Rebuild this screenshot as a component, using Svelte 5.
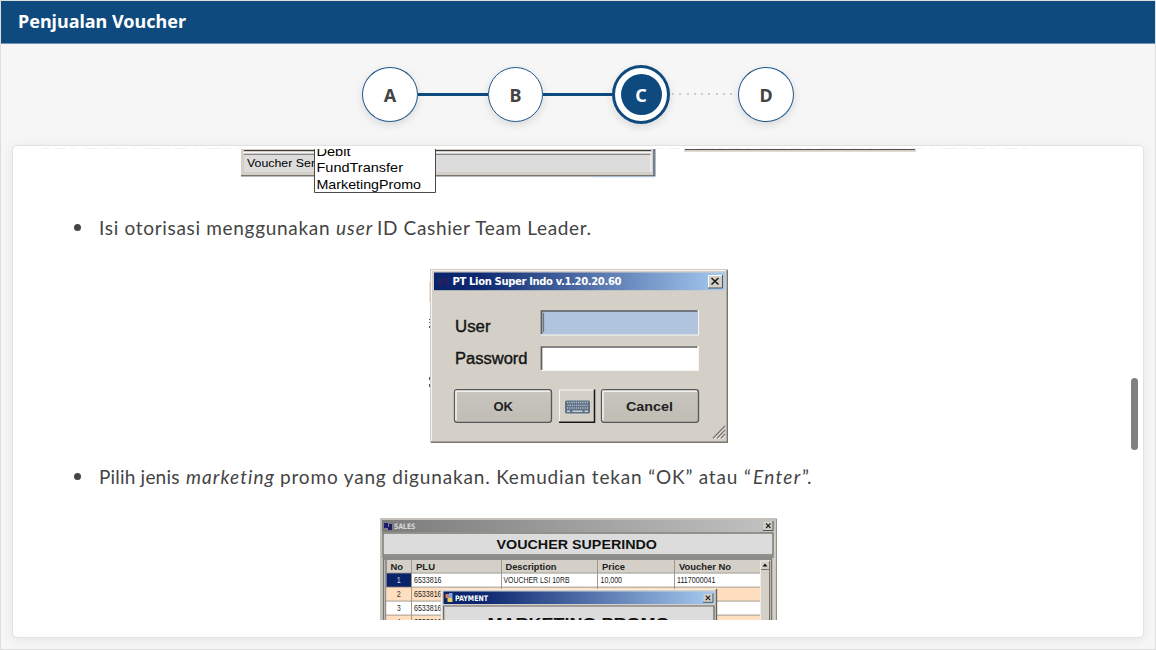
<script>
  const steps = [
    { label: 'A', state: 'done' },
    { label: 'B', state: 'done' },
    { label: 'C', state: 'current' },
    { label: 'D', state: 'todo' }
  ];
  const rows = [
    { y: 573, n: '1', fill: '#fff' },
    { y: 587, n: '2', fill: '#ffdfbf' },
    { y: 601, n: '3', fill: '#fff' },
    { y: 615, n: '4', fill: '#ffdfbf' }
  ];
  const keys = [0, 1, 2, 3, 4, 5, 6, 7, 8, 9];
</script>

<div class="page">
  <header>Penjualan Voucher</header>
  <nav>
    {#each steps as s, i}
      {#if i > 0}
        <span class="link l{i}" class:dotted={s.state === 'todo'}></span>
      {/if}
      <span class="step s{i}" class:current={s.state === 'current'}><b>{s.label}</b></span>
    {/each}
  </nav>

  <main>
    <div class="view">
      <svg class="wide" width="1129" height="46" viewBox="13 148 1129 46">
        <path d="M42 148.5H242M656 148.5H1030" stroke="#f3f3f3" stroke-dasharray="7 4 13 5 4 9 16 3" />
        <rect x="241" y="149" width="414.500" height="27" fill="#d4d0c8" />
        <path d="M244 150.500H651" stroke="#3a3a3e" />
        <path d="M243 152.500H652" stroke="#f4f4f4" />
        <rect x="244" y="154" width="407" height="18" fill="#dcdcdc" />
        <path d="M244 154.500H650.500" stroke="#858585" />
        <path d="M651 154V172" stroke="#fff" />
        <path d="M241 175.700H655" stroke="#77756f" stroke-width="1.400" />
        <path d="M654 149V176" stroke="#666a72" stroke-width="1.600" />
        <path d="M655.500 149V176.500M593 176.700H655" stroke="#a7bfdc" />
        <text x="247" y="167" font-size="11.500" textLength="68" lengthAdjust="spacingAndGlyphs">Voucher Ser</text>
        <path d="M314.500 149V192.500H435.500V149" fill="#fff" stroke="#4a4a4a" />
        <g font-size="13.500">
          <clipPath id="crop"><rect x="315" y="149" width="120" height="43" /></clipPath>
          <g clip-path="url(#crop)"><text x="316.500" y="156" textLength="34" lengthAdjust="spacingAndGlyphs">Debit</text></g>
          <text x="316.500" y="172.300" textLength="86.500" lengthAdjust="spacingAndGlyphs">FundTransfer</text>
          <text x="316.500" y="189" textLength="104.500" lengthAdjust="spacingAndGlyphs">MarketingPromo</text>
        </g>
        <path d="M684 150.500H916" stroke="#d4cec3" stroke-width="2.600" />
        <path d="M685 149.500H915" stroke="#55524d" />
      </svg>

      <p class="item first"><i class="dot"></i><span class="a">Isi otorisasi menggunakan</span><em class="b">user</em><span class="c">ID Cashier Team Leader.</span></p>

      <svg class="wide" width="1129" height="175" viewBox="13 269 1129 175">
        <defs>
          <linearGradient id="bar"><stop offset="0" stop-color="#0a246a" /><stop offset=".15" stop-color="#0d2870" /><stop offset="1" stop-color="#a6caf0" /></linearGradient>
          <linearGradient id="btn" x2="0" y2="1"><stop offset="0" stop-color="#c8c5be" /><stop offset="1" stop-color="#c0bdb5" /></linearGradient>
        </defs>
        <path d="M429.500 282v20" stroke="#f3dfcb" />
        <path d="M430 319v1M430 322v1M430 326v2M430 377v3M430 384v3" stroke="#222" stroke-width="1.500" />
        <rect x="430" y="269" width="298" height="174" fill="#d4d0c8" />
        <path d="M431.500 442V270.500H726" fill="none" stroke="#f5f3ef" />
        <path d="M430.500 442V269.500H727" fill="none" stroke="#cfccc5" />
        <path d="M727.300 270V442.300H431" fill="none" stroke="#77766f" stroke-width="1.400" />
        <rect x="434" y="272.500" width="291" height="17.700" fill="url(#bar)" />
        <path d="M438 278h3v3h3v-3h5v7h-4v-2h-3v2h-4z" fill="#251f63" />
        <text class="tahoma" x="452.500" y="285" font-size="10" textLength="169">PT Lion Super Indo v.1.20.20.60</text>
        <rect x="708" y="275" width="14.500" height="13" fill="#d4d0c8" />
        <path d="M708.500 287.500V275.500H722" fill="none" stroke="#fff" />
        <path d="M722.500 275V288H708" fill="none" stroke="#55534f" />
        <path d="M711.500 278l7 6.500M718.500 278l-7 6.500" stroke="#1d1d1d" stroke-width="1.700" />
        <g font-size="16" fill="#151515" stroke="#151515" stroke-width=".4">
          <text x="455" y="331.500" textLength="35.500" lengthAdjust="spacingAndGlyphs">User</text>
          <text x="455" y="364" textLength="72.500" lengthAdjust="spacingAndGlyphs">Password</text>
        </g>
        <rect x="541" y="310" width="157.500" height="25" fill="#b0c4de" />
        <path d="M541.500 334V311H697.500" fill="none" stroke="#5e5e5e" stroke-width="1.700" />
        <path d="M543.600 313v19" stroke="#6a6d74" />
        <path d="M541 335H698.500V310" fill="none" stroke="#f8f7f4" />
        <rect x="541" y="346" width="157.500" height="24" fill="#fff" />
        <path d="M541.500 370V347H697.500" fill="none" stroke="#5e5e5e" stroke-width="1.700" />
        <path d="M541 370.500H698.500V346" fill="none" stroke="#f8f7f4" />
        {#each [454, 601] as x}
          <rect x={x + 0.5} y="389.700" width="97" height="32.600" rx="2.500" fill="url(#btn)" stroke="#55585a" stroke-width="1.300" />
          <path d="M{x + 2} 420.500V391.200H{x + 96}" fill="none" stroke="#f2f0ec" stroke-width="1.600" />
        {/each}
        <g font-size="13" font-weight="bold" fill="#222">
          <text x="493.500" y="410.500" textLength="19.500" lengthAdjust="spacingAndGlyphs">OK</text>
          <text x="626" y="410.500" textLength="47" lengthAdjust="spacingAndGlyphs">Cancel</text>
        </g>
        <rect x="559" y="389.500" width="36" height="33" fill="#d4d0c8" />
        <path d="M559.500 422V390H594" fill="none" stroke="#f7f6f2" />
        <path d="M594.500 389.500V422.300H559" fill="none" stroke="#161616" stroke-width="1.500" />
        <rect x="565" y="400.500" width="25" height="13" rx="1.500" fill="#5d7086" />
        {#each keys as k}
          <path d="M{567 + k * 2.2} 402.500h1.200M{567.6 + k * 2.1} 405.300h1.200M{567 + k * 2.2} 408h1.200" stroke="#b9c2ca" stroke-width="1.300" />
        {/each}
        <path d="M567 411.200h3M572.500 411.200h10M584.500 411.200h3.500" stroke="#cbd2d7" stroke-width="1.400" />
        <path d="M714 439l11-12M718 439l7-8M722 439l3-4" stroke="#fff" />
        <path d="M713 438.300l12-12.300M717 438.300l8-8.300M721 438.300l4-4.300" stroke="#77756f" stroke-width="1.300" />
      </svg>

      <p class="item second"><i class="dot"></i><span class="d">Pilih jenis</span><em class="e">marketing</em><span class="f">promo yang digunakan. Kemudian tekan “OK” atau “</span><em class="g">Enter</em><span class="h">”.</span></p>

      <svg class="wide" width="1129" height="102" viewBox="13 518 1129 102">
        <defs>
          <linearGradient id="grey"><stop offset="0" stop-color="#7c7c7c" /><stop offset="1" stop-color="#c2c2c2" /></linearGradient>
        </defs>
        <rect x="380" y="518" width="397" height="110" fill="#d4d0c8" />
        <path d="M381 620V519H776" fill="none" stroke="#b5b2ac" />
        <path d="M776.400 519V620" stroke="#8b8a86" />
        <rect x="382" y="520" width="393" height="12" fill="url(#grey)" />
        <path d="M384 523h4v4h1v-3h3v6h-4v-2h-4z" fill="#1d1b6c" />
        <text x="394" y="528.500" class="tahoma" font-size="7.500" textLength="21.500" lengthAdjust="spacingAndGlyphs" style:fill="#d8d8d8">SALES</text>
        <rect x="763.500" y="521.500" width="9" height="8.500" fill="#d4d0c8" />
        <path d="M773 521V530.500H763" fill="none" stroke="#555" />
        <path d="M766 523.500l4.500 4.500M770.500 523.500l-4.500 4.500" stroke="#222" stroke-width="1.200" />
        <rect x="383" y="533" width="390" height="22" fill="#dcdcdc" stroke="#66645f" stroke-width="1.200" />
        <text x="496.500" y="549.200" font-size="13.500" font-weight="bold" fill="#111" textLength="160.500" lengthAdjust="spacingAndGlyphs">VOUCHER SUPERINDO</text>
        <path d="M382 557H774" stroke="#8d8d8c" stroke-width="2" />
        <path d="M383.500 620V559H771.500V620" fill="#d4d0c8" stroke="#777672" stroke-width="1.500" />
        <path d="M386 560V620" stroke="#555" />
        {#each rows as r}
          <rect x="386.500" y={r.y} width="373.500" height="14" fill={r.fill} />
          <rect x="386.500" y={r.y} width="25" height="14" fill={r.n === '1' ? '#0a246a' : r.fill} />
          <path d="M386 {r.y + 0.1}H760" stroke="#8e8a84" stroke-width=".8" />
          <text x="396.800" y={r.y + 9.9} font-size="8.500" fill={r.n === '1' ? '#cfd6e8' : '#333'} textLength="4" lengthAdjust="spacingAndGlyphs">{r.n}</text>
          <text x="414" y={r.y + 9.9} font-size="9" fill="#222" textLength="27.500" lengthAdjust="spacingAndGlyphs">6533816</text>
        {/each}
        <path d="M411.500 560V620M501.500 560V592M597.500 560V592M674.500 560V592" stroke="#96928b" stroke-width=".9" />
        <g font-size="9.500" font-weight="bold" fill="#222">
          <text x="390.500" y="570" textLength="12.500" lengthAdjust="spacingAndGlyphs">No</text>
          <text x="416" y="570" textLength="19" lengthAdjust="spacingAndGlyphs">PLU</text>
          <text x="505.500" y="570" textLength="51" lengthAdjust="spacingAndGlyphs">Description</text>
          <text x="602" y="570" textLength="23" lengthAdjust="spacingAndGlyphs">Price</text>
          <text x="679" y="570" textLength="52" lengthAdjust="spacingAndGlyphs">Voucher No</text>
        </g>
        <g font-size="8.800" fill="#222">
          <text x="503.500" y="582.900" textLength="66" lengthAdjust="spacingAndGlyphs">VOUCHER LSI 10RB</text>
          <text x="600.500" y="582.900" textLength="21.500" lengthAdjust="spacingAndGlyphs">10,000</text>
          <text x="677" y="582.900" textLength="38.500" lengthAdjust="spacingAndGlyphs">1117000041</text>
        </g>
        <rect x="760" y="560" width="10" height="60" fill="#d4d0c8" />
        <path d="M760.500 620V561H769" fill="none" stroke="#efede8" />
        <path d="M769.500 561V620M761 569.500H769" stroke="#74726d" />
        <path d="M762.500 566.500l2.500-3 2.500 3z" fill="#111" />
        <rect x="440.500" y="589" width="276.500" height="31" fill="#d4d0c8" />
        <path d="M441.500 620V589.500H716" fill="none" stroke="#f0eee9" />
        <path d="M716.500 589V620" stroke="#65635f" stroke-width="1.400" />
        <rect x="443.500" y="591.500" width="271" height="12.500" fill="url(#bar)" />
        <rect x="445.500" y="594" width="4" height="4" fill="#dc7b56" />
        <rect x="449" y="593" width="3.500" height="5" fill="#79a6ee" />
        <rect x="447.500" y="598" width="5" height="4" fill="#f0cd55" />
        <text x="455" y="600.500" class="tahoma" font-size="7.500" textLength="33" lengthAdjust="spacingAndGlyphs">PAYMENT</text>
        <rect x="703.500" y="594" width="9" height="8" fill="#d4d0c8" />
        <path d="M713 593.500V602.300H703" fill="none" stroke="#555" />
        <path d="M705.700 595.700l4.500 4.500M710.200 595.700l-4.500 4.500" stroke="#222" stroke-width="1.200" />
        <path d="M443.700 620V606H714V620" fill="#dcdcdc" stroke="#65635f" stroke-width="1.200" />
        <text x="487.500" y="628.300" font-size="14" font-weight="bold" fill="#111" textLength="182" lengthAdjust="spacingAndGlyphs">MARKETING PROMO</text>
      </svg>
    </div>
    <div class="thumb"></div>
  </main>
</div>

<style>
  :global(body) { margin: 0; }
  .page {
    box-sizing: border-box; width: 1156px; height: 650px; overflow: hidden;
    border: 1px solid #dedede; background: #f6f6f6; display: flex; flex-direction: column;
    font-family: "Noto Sans", sans-serif; color: #444;
  }
  header {
    box-sizing: border-box; flex: none; height: 43px; padding-left: 17px; background: #0f4a7e;
    border-bottom: 1px solid #7493b0; color: #fff; font-weight: 700; font-size: 18px; line-height: 41px;
  }
  nav { display: flex; align-items: center; height: 101px; flex: none; padding-left: 361px; }
  .step {
    box-sizing: border-box; flex: none; width: 56px; height: 55px; border-radius: 50%;
    border: 1px solid #1d578c; background: #fff; display: flex; align-items: center;
    justify-content: center; font-size: 18px; box-shadow: 0 3px 8px rgba(0, 0, 0, .12);
  }
  .s1 { width: 55px; }
  .step b { line-height: 24px; margin-top: 1px; }
  .step.current { width: 58px; height: 59px; border: 3px solid #0f4a7e; }
  .current b {
    width: 41px; height: 41px; margin: -1px 0 0; border-radius: 50%; background: #0f4a7e;
    color: #fff; text-align: center; line-height: 43px;
  }
  .link { flex: none; width: 70px; height: 3px; background: #0f4a7e; }
  .l2 { width: 69px; }
  .dotted {
    width: 68px; height: 2px; margin-bottom: 1px;
    background: repeating-linear-gradient(90deg, transparent 0 2px, #cdcdcd 2px 4px, transparent 4px 7.3px);
  }
  main {
    box-sizing: border-box; width: 1132px; height: 493px; margin-left: 11px; padding-top: 2px;
    background: #fff; border: 1px solid #e2e2e2; border-radius: 5px;
    box-shadow: 0 2px 12px rgba(0, 0, 0, .07); display: flex; flex: none;
  }
  .view { width: 1118px; height: 472px; overflow: hidden; flex: none; }
  .wide { display: block; font-family: "Liberation Sans", sans-serif; }
  .tahoma { font-family: "DejaVu Sans", sans-serif; font-weight: 700; fill: #fff; }
  .item {
    display: flex; align-items: center; height: 36px; margin: 0; padding-left: 61px;
    font-family: Lato, sans-serif; font-size: 19px; color: #444; white-space: pre;
  }
  .first { padding-top: 15px; padding-bottom: 24px; }
  .second { padding-top: 14px; padding-bottom: 24px; }
  .dot { width: 7px; height: 7px; border-radius: 50%; background: #444; margin-right: 18px; flex: none; }
  .item span, .item em { flex: none; }
  .a { width: 237px; letter-spacing: .69px; }
  .b { width: 41px; letter-spacing: 1px; }
  .c { letter-spacing: .65px; }
  .d { width: 87px; letter-spacing: .2px; }
  .e { width: 94px; letter-spacing: 1.1px; }
  .f { width: 473px; letter-spacing: .83px; }
  .g { width: 49px; letter-spacing: 1.3px; }
  .thumb { width: 7px; height: 72px; border-radius: 4px; background: #808080; margin-top: 230px; flex: none; }
</style>
